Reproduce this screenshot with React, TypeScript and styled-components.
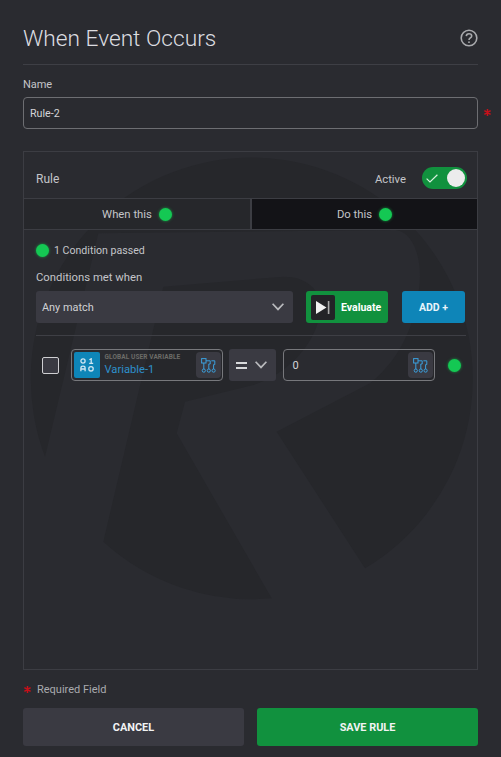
import React from 'react';
import styled, { createGlobalStyle } from 'styled-components';

const GlobalStyle = createGlobalStyle`
    html, body {
        margin: 0;
        padding: 0;
        background: #2a2b30;
    }
    * {
        box-sizing: border-box;
    }
`;

const Page = styled.div`
    width: 501px;
    height: 757px;
    overflow: hidden;
    padding: 0 23px;
    background: #2a2b30;
    color: #c4c5c9;
    font-family: Roboto, "Liberation Sans", sans-serif;
    font-size: 12px;
`;

const Header = styled.header`
    height: 65px;
    display: flex;
    align-items: center;
    justify-content: space-between;
    padding-top: 12px;
    border-bottom: 1px solid #3e3f45;
`;

const Title = styled.h1`
    margin: 0;
    font-size: 22.7px;
    font-weight: 300;
    color: #dcdde0;
`;

const HelpButton = styled.div`
    display: flex;
    color: #a9aaad;
`;

const FieldLabel = styled.div`
    height: 32px;
    display: flex;
    align-items: center;
    padding-top: 6px;
    font-size: 11px;
    letter-spacing: -0.1px;
`;

const NameRow = styled.div`
    position: relative;
    height: 32px;
`;

const NameInput = styled.div`
    height: 100%;
    display: flex;
    align-items: center;
    padding-left: 6px;
    border: 1.5px solid #6d6e72;
    border-radius: 4px;
    font-size: 10.7px;
    color: #d4d5d8;
`;

const SideStar = styled.span`
    position: absolute;
    left: 461px;
    top: 12px;
    display: flex;
`;

const RulePanel = styled.section`
    position: relative;
    height: 519px;
    margin-top: 22px;
    border: 1px solid #3c3d43;
    overflow: hidden;
`;

const Watermark = styled.svg`
    position: absolute;
    left: -4px;
    top: -2px;
    width: 460px;
    height: 480px;
    pointer-events: none;
`;

const PanelContent = styled.div`
    position: relative;
`;

const RuleBar = styled.div`
    height: 47px;
    display: flex;
    align-items: center;
    justify-content: space-between;
    padding: 8px 10px 0 12px;
    border-bottom: 1px solid #3c3d43;
`;

const ActiveGroup = styled.div`
    display: flex;
    align-items: center;
    gap: 16px;
    font-size: 11.3px;
`;

const Toggle = styled.div`
    position: relative;
    width: 45px;
    height: 22px;
    margin-top: -2px;
    display: flex;
    align-items: center;
    padding-left: 4px;
    border-radius: 11px;
    background: #11913e;
    color: #d9f0df;
`;

const Knob = styled.span`
    position: absolute;
    right: 2px;
    top: 2px;
    width: 18px;
    height: 18px;
    border-radius: 50%;
    background: #ececec;
`;

const Tabs = styled.div`
    display: grid;
    grid-template-columns: 226px 1fr;
    column-gap: 2px;
    height: 31px;
    background: #3c3d43;
    border-bottom: 1px solid #3c3d43;
`;

const Tab = styled.div<{ $dark?: boolean }>`
    display: flex;
    align-items: center;
    justify-content: center;
    gap: 7px;
    font-size: 11.3px;
    background: ${(p) => (p.$dark ? '#131317' : '#26272b')};
`;

const Dot = styled.span`
    flex: none;
    width: 13px;
    height: 13px;
    border-radius: 50%;
    background: #14c853;
    box-shadow: 0 0 3px rgba(20, 200, 83, 0.7);
`;

const Body = styled.div`
    padding: 0 12px;
`;

const PassedRow = styled.div`
    height: 40px;
    display: flex;
    align-items: center;
    gap: 5px;
    font-size: 10.6px;
`;

const ConditionsLabel = styled.div`
    height: 15px;
    line-height: 15px;
    margin-bottom: 6px;
    font-size: 11.3px;
`;

const Controls = styled.div`
    display: flex;
    height: 32px;
`;

const SelectBox = styled.div`
    width: 257px;
    display: flex;
    align-items: center;
    justify-content: space-between;
    padding: 0 9px 0 6px;
    border-radius: 3px;
    background: #3a3a42;
    color: #d0d1d4;
    font-size: 10.9px;
`;

const EvaluateButton = styled.div`
    width: 82px;
    margin-left: 13px;
    display: flex;
    align-items: center;
    gap: 6px;
    padding-left: 5px;
    border-radius: 3px;
    background: #11913e;
    color: #fff;
    font-size: 10.5px;
    font-weight: 700;
`;

const PlayTile = styled.span`
    width: 24px;
    height: 25px;
    display: flex;
    align-items: center;
    justify-content: center;
    border-radius: 2px;
    background: #232327;
`;

const AddButton = styled.div`
    width: 63px;
    margin-left: 14px;
    display: flex;
    align-items: center;
    justify-content: center;
    border-radius: 3px;
    background: #0e85b8;
    color: #e8f4fa;
    font-size: 10.5px;
    font-weight: 700;
`;

const Separator = styled.div`
    height: 1px;
    width: 430px;
    margin-top: 12px;
    background: #3e3f45;
`;

const ConditionRow = styled.div`
    display: flex;
    align-items: center;
    height: 32px;
    margin-top: 13px;
`;

const Checkbox = styled.span`
    width: 17px;
    height: 17px;
    margin: 0 12px 0 6px;
    border: 1.5px solid #cfcfd2;
    border-radius: 2px;
    background: #3a3a42;
`;

const ValueBox = styled.div`
    width: 152px;
    height: 32px;
    display: flex;
    align-items: center;
    justify-content: space-between;
    padding: 1.5px;
    border: 1.5px solid #77787c;
    border-radius: 4px;
`;

const VariableTile = styled.span`
    flex: none;
    width: 26px;
    height: 26px;
    display: flex;
    align-items: center;
    justify-content: center;
    border-radius: 2px;
    background: #0e85b8;
    color: #cfe6f2;
`;

const VariableText = styled.div`
    flex: 1;
    min-width: 0;
    padding-left: 5px;
`;

const VariableKind = styled.div`
    font-size: 6.5px;
    font-weight: 700;
    line-height: 9px;
    letter-spacing: 0.1px;
    white-space: nowrap;
    color: #6c6c68;
`;

const VariableName = styled.div`
    font-size: 11.2px;
    line-height: 14px;
    margin-top: 1px;
    color: #2d8fcb;
`;

const ValueText = styled.span`
    padding-left: 7px;
    font-size: 11px;
    color: #d4d5d8;
`;

const TreeButton = styled.span`
    flex: none;
    width: 25px;
    height: 26px;
    display: flex;
    align-items: center;
    justify-content: center;
    border-radius: 4px;
    background: #3a3a42;
    color: #3b9fdc;
`;

const OperatorBox = styled.div`
    width: 47px;
    height: 32px;
    margin: 0 7px 0 6px;
    display: flex;
    align-items: center;
    gap: 8px;
    padding-left: 7px;
    border-radius: 3px;
    background: #3a3a42;
`;

const RowDot = styled(Dot)`
    margin-left: 13px;
`;

const RequiredNote = styled.div`
    height: 38px;
    display: flex;
    align-items: center;
    gap: 6px;
    padding-left: 1px;
    color: #a9aaae;
    font-size: 11px;
`;

const Footer = styled.footer`
    display: grid;
    grid-template-columns: 221px 221px;
    justify-content: space-between;
`;

const FooterButton = styled.div<{ $primary?: boolean }>`
    height: 38px;
    display: flex;
    align-items: center;
    justify-content: center;
    border-radius: 3px;
    background: ${(p) => (p.$primary ? '#11913e' : '#3a3a42')};
    color: #f2f3f4;
    font-size: 10.9px;
    font-weight: 700;
`;

const Asterisk: React.FC = () => (
    <svg width="7" height="7" viewBox="0 0 7 7" fill="none" stroke="#c8101a" strokeWidth="1.5">
        <path d="M3.5 0 V7 M0.4 1.7 L6.6 5.3 M0.4 5.3 L6.6 1.7" />
    </svg>
);

const Chevron: React.FC = () => (
    <svg width="12" height="7.5" viewBox="0 0 12 7.4" fill="none" stroke="#b9babd" strokeWidth="1.7">
        <path d="M0.6 0.7 L6 6.4 L11.4 0.7" />
    </svg>
);

const TreeIcon: React.FC = () => (
    <svg width="15" height="15" viewBox="0 0 15 15" fill="none" stroke="currentColor" strokeWidth="1">
        <rect x="0.6" y="0.6" width="4.4" height="4.4" />
        <path d="M2.8 5 V11" />
        <circle cx="2.8" cy="12.6" r="1.6" />
        <circle cx="7.8" cy="12.6" r="1.6" />
        <circle cx="12.6" cy="12.6" r="1.6" />
        <path d="M5 2.8 H9.2 V6 H7.8 V11" />
        <path d="M10.4 2.8 H13.8 V6.6 H12.6 V11" />
    </svg>
);

const BinaryIcon: React.FC = () => (
    <svg width="14" height="14" viewBox="0 0 14 14" fill="none" stroke="currentColor" strokeWidth="1.3">
        <circle cx="3" cy="3" r="2.1" />
        <path d="M9.4 1.8 L11.2 0.8 V5.4 M9.2 5.4 H13.2" />
        <path d="M0.9 13.2 V10 Q0.9 8.2 3 8.2 Q5.1 8.2 5.1 10 V13.2 M0.9 11 H5.1" />
        <circle cx="11" cy="10.8" r="2.2" />
    </svg>
);

const App: React.FC = () => {
    return (
        <Page>
            <GlobalStyle />
            <Header>
                <Title>When Event Occurs</Title>
                <HelpButton>
                    <svg width="18" height="18" viewBox="0 0 18 18" fill="none" stroke="currentColor">
                        <circle cx="9" cy="9" r="7.8" strokeWidth="1.6" />
                        <path d="M6.3 7.1 Q6.4 4.7 9 4.7 Q11.7 4.7 11.7 6.9 Q11.7 8.2 10.2 9 Q9 9.7 9 11" strokeWidth="1.6" />
                        <circle cx="9" cy="13.2" r="0.9" fill="currentColor" stroke="none" />
                    </svg>
                </HelpButton>
            </Header>

            <FieldLabel>Name</FieldLabel>
            <NameRow>
                <NameInput>Rule-2</NameInput>
                <SideStar>
                    <Asterisk />
                </SideStar>
            </NameRow>

            <RulePanel>
                <Watermark viewBox="0 0 1380 1440">
                    <path
                        fill="#26272b"
                        d="M75 920 A663 663 0 1 1 1035 1255 L770 845 L1050 700 C1150 620 1195 500 1200 380 C1200 300 1170 240 1120 240 L235 250 Z"
                    />
                    <path
                        fill="#26272b"
                        d="M250 1175 L430 410 L790 380 C870 380 910 430 900 490 C885 590 790 680 700 705 L495 755 L470 850 L755 1345 A663 663 0 0 1 250 1175 Z"
                    />
                </Watermark>
                <PanelContent>
                    <RuleBar>
                        <span>Rule</span>
                        <ActiveGroup>
                            <span>Active</span>
                            <Toggle>
                                <svg width="12" height="9" viewBox="0 0 12 9" fill="none" stroke="currentColor" strokeWidth="1.2">
                                    <path d="M0.6 4.6 L4 8 L11.4 0.8" />
                                </svg>
                                <Knob />
                            </Toggle>
                        </ActiveGroup>
                    </RuleBar>
                    <Tabs>
                        <Tab>
                            When this
                            <Dot />
                        </Tab>
                        <Tab $dark>
                            Do this
                            <Dot />
                        </Tab>
                    </Tabs>
                    <Body>
                        <PassedRow>
                            <Dot />
                            1 Condition passed
                        </PassedRow>
                        <ConditionsLabel>Conditions met when</ConditionsLabel>
                        <Controls>
                            <SelectBox>
                                Any match
                                <Chevron />
                            </SelectBox>
                            <EvaluateButton>
                                <PlayTile>
                                    <svg width="14" height="13" viewBox="0 0 14 13">
                                        <path d="M0 0 L10.5 6.5 L0 13 Z" fill="#f1f1f1" />
                                        <rect x="11.8" y="0" width="1.6" height="13" fill="#a9a9a9" />
                                    </svg>
                                </PlayTile>
                                Evaluate
                            </EvaluateButton>
                            <AddButton>ADD +</AddButton>
                        </Controls>
                        <Separator />
                        <ConditionRow>
                            <Checkbox />
                            <ValueBox>
                                <VariableTile>
                                    <BinaryIcon />
                                </VariableTile>
                                <VariableText>
                                    <VariableKind>GLOBAL USER VARIABLE</VariableKind>
                                    <VariableName>Variable-1</VariableName>
                                </VariableText>
                                <TreeButton>
                                    <TreeIcon />
                                </TreeButton>
                            </ValueBox>
                            <OperatorBox>
                                <svg width="11" height="7" viewBox="0 0 11 7" fill="#d8d9db">
                                    <rect width="11" height="2" />
                                    <rect y="5" width="11" height="2" />
                                </svg>
                                <Chevron />
                            </OperatorBox>
                            <ValueBox>
                                <ValueText>0</ValueText>
                                <TreeButton>
                                    <TreeIcon />
                                </TreeButton>
                            </ValueBox>
                            <RowDot />
                        </ConditionRow>
                    </Body>
                </PanelContent>
            </RulePanel>

            <RequiredNote>
                <Asterisk />
                Required Field
            </RequiredNote>
            <Footer>
                <FooterButton>CANCEL</FooterButton>
                <FooterButton $primary>SAVE RULE</FooterButton>
            </Footer>
        </Page>
    );
};

export default App;
